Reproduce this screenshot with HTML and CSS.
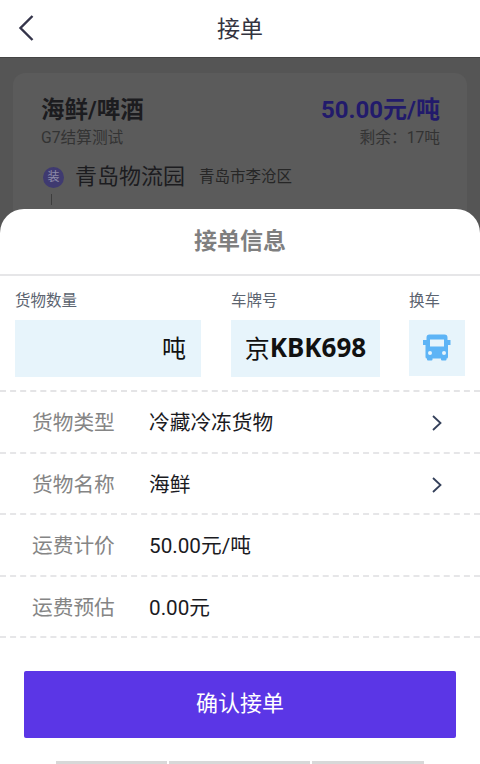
FILE: index.html
```html
<!DOCTYPE html>
<html lang="zh">
<head>
<meta charset="utf-8">
<title>接单</title>
<link rel="stylesheet" href="styles.css">
</head>
<body>
<div class="app">
  <header class="nav">
    <svg class="back" width="18" height="28" viewBox="0 0 18 28"><path d="M15.500 2 3.500 14l12 12" fill="none" stroke="#34344a" stroke-width="2.400"/></svg>
    <h1 class="nav-title">接单</h1>
  </header>
  <main class="backdrop">
    <section class="card">
      <div class="card-top">
        <div class="goods">海鲜/啤酒</div>
        <div class="price">50.00元/吨</div>
      </div>
      <div class="card-sub">
        <span>G7结算测试</span>
        <span>剩余：17吨</span>
      </div>
      <div class="place">
        <span class="dot">装</span>
        <span class="place-name">青岛物流园</span>
        <span class="place-city">青岛市李沧区</span>
      </div>
      <div class="connector"></div>
      <div class="place place-next">
        <span class="dot dot-green">卸</span>
        <span class="place-name">青岛物流园</span>
        <span class="place-city">青岛市李沧区</span>
      </div>
    </section>
  </main>
  <section class="sheet">
    <h2 class="sheet-title">接单信息</h2>
    <div class="inputs">
      <div class="field field-qty">
        <label class="field-label">货物数量</label>
        <div class="box box-qty">吨</div>
      </div>
      <div class="field field-plate">
        <label class="field-label">车牌号</label>
        <div class="box box-plate">京<b>KBK698</b></div>
      </div>
      <div class="field field-swap">
        <label class="field-label">换车</label>
        <div class="box box-swap">
          <svg width="28" height="28" viewBox="0 0 28 28"><path fill="#5db4f6" fill-rule="evenodd" d="M6.500 0.500h15a3 3 0 0 1 3 3v2.500h3v5h-2.500v12a1.500 1.500 0 0 1-1.500 1.500v1a1 1 0 0 1-1 1h-3.500a1 1 0 0 1-1-1v-1H9.500v1a1 1 0 0 1-1 1H5a1 1 0 0 1-1-1v-1A1.500 1.500 0 0 1 2.500 23V11H0V6h3.500V3.500a3 3 0 0 1 3-3Zm.5 5v7h14v-7H7Zm-2 13.500a2 2 0 1 0 4 0 2 2 0 0 0-4 0Zm14 0a2 2 0 1 0 4 0 2 2 0 0 0-4 0Z"/></svg>
        </div>
      </div>
    </div>
    <div class="row">
      <span class="row-label">货物类型</span>
      <span class="row-value">冷藏冷冻货物</span>
      <svg class="chev" width="12" height="18" viewBox="0 0 12 18"><path d="m2 2 7.500 7L2 16" fill="none" stroke="#34405a" stroke-width="1.800"/></svg>
    </div>
    <div class="row">
      <span class="row-label">货物名称</span>
      <span class="row-value">海鲜</span>
      <svg class="chev" width="12" height="18" viewBox="0 0 12 18"><path d="m2 2 7.500 7L2 16" fill="none" stroke="#34405a" stroke-width="1.800"/></svg>
    </div>
    <div class="row">
      <span class="row-label">运费计价</span>
      <span class="row-value">50.00元/吨</span>
    </div>
    <div class="row">
      <span class="row-label">运费预估</span>
      <span class="row-value">0.00元</span>
    </div>
    <button class="confirm" type="button">确认接单</button>
    <div class="peek"><span class="peek-a"></span><span class="peek-b"></span><span class="peek-c"></span></div>
  </section>
</div>
</body>
</html>
```

FILE: styles.css
```css
* { box-sizing: border-box; }
html, body { margin: 0; padding: 0; }
body {
  width: 480px;
  height: 764px;
  overflow: hidden;
  background: #fff;
  font-family: Roboto, "Noto Sans CJK SC", sans-serif;
  color: #111;
}
.app { position: relative; width: 480px; height: 764px; overflow: hidden; }

.nav {
  height: 57px;
  padding-top: 2px;
  display: flex;
  align-items: center;
  justify-content: center;
  position: relative;
  background: #fff;
}
.back { position: absolute; left: 17px; top: 14px; }
.nav-title { margin: 0; font-size: 23px; font-weight: 400; color: #33333f; line-height: 1; }

.backdrop {
  height: 180px;
  overflow: hidden;
  background: #555;
  border-top: 1px solid #444;
  padding: 15px 13px 0;
}
.card {
  height: 300px;
  background: #5b5b5b;
  border-radius: 12px;
  padding: 22px 27px 0 28px;
}
.card-top { display: flex; justify-content: space-between; align-items: center; height: 30px; }
.goods { font-size: 23.500px; font-weight: 700; color: #1c1c1f; line-height: 30px; }
.price { font-size: 24px; font-weight: 700; color: #221a6b; line-height: 30px; }
.card-sub {
  display: flex;
  justify-content: space-between;
  font-size: 15.700px;
  line-height: 20px;
  color: #333;
  margin-top: 3px;
}
.place { display: flex; align-items: center; height: 26px; margin-top: 16px; }
.place-next { align-items: flex-start; height: 18px; margin-top: 7px; }
.dot {
  width: 21px;
  height: 21px;
  margin-left: 2px;
  border-radius: 50%;
  background: #3f3a70;
  color: #8d8aa8;
  font-size: 12px;
  line-height: 21px;
  text-align: center;
  flex: none;
}
.dot-green { background: #2f6a4f; margin-top: 1px; }
.place-name { margin-left: 11px; font-size: 22px; line-height: 26px; color: #1c1c1f; }
.place-city { margin-left: 14px; font-size: 15.500px; line-height: 26px; color: #262626; }
.place-next .place-name, .place-next .place-city { line-height: 18px; height: 18px; }
.place-next .place-city { font-size: 13px; line-height: 15px; height: 15px; margin-top: 2px; }
.connector { width: 1px; height: 11px; margin: 4px 0 0 10px; background: #3d3d3d; }

.sheet {
  position: absolute;
  left: 0;
  top: 209px;
  width: 480px;
  height: 555px;
  background: #fff;
  border-radius: 24px 24px 0 0;
}
.sheet-title {
  margin: 0;
  height: 67px;
  border-bottom: 2px solid #e6e6e8;
  text-align: center;
  font-size: 23px;
  font-weight: 700;
  line-height: 66px;
  color: #7f7f7f;
}
.inputs {
  height: 116px;
  display: flex;
  padding: 14px 0 0 15px;
  border-bottom: 2px dashed #e4e4e6;
}
.field-qty { width: 186px; margin-right: 30px; }
.field-plate { width: 149px; margin-right: 29px; }
.field-swap { width: 56px; }
.field-label { display: block; height: 22px; font-size: 15.500px; line-height: 22px; color: #5c6470; margin-bottom: 8px; }
.box { background: #e7f4fb; height: 57px; display: flex; align-items: center; color: #111; }
.box-qty { justify-content: flex-end; padding: 0 15px 4px 0; font-size: 24px; }
.box-plate { justify-content: center; padding-bottom: 3px; font-size: 25px; }
.box-plate b { font-family: "Noto Sans", sans-serif; font-weight: 700; font-size: 26px; }
.box-swap { justify-content: center; height: 56px; }

.row {
  height: 61.500px;
  display: flex;
  align-items: center;
  padding: 3px 37px 0 32px;
  border-bottom: 2px dashed #e6e6e8;
}
.row-label { width: 117px; font-size: 20.700px; color: #858585; line-height: 28px; }
.row-value { flex: 1; font-size: 20.700px; color: #1b1b1f; line-height: 28px; }
.chev { flex: none; }

.confirm {
  display: block;
  width: 432px;
  height: 67px;
  margin: 33px 0 0 24px;
  padding: 0 0 8px;
  border: none;
  border-radius: 2px;
  background: #5b36e6;
  color: #fff;
  font-family: inherit;
  font-size: 22px;
}
.peek { display: flex; gap: 2px; margin: 23px 0 0 56px; width: 368px; height: 6px; }
.peek span { display: block; height: 4px; background: #d8d8d8; }
.peek-a { width: 111px; }
.peek-b { width: 141px; }
.peek-c { width: 112px; }
```
